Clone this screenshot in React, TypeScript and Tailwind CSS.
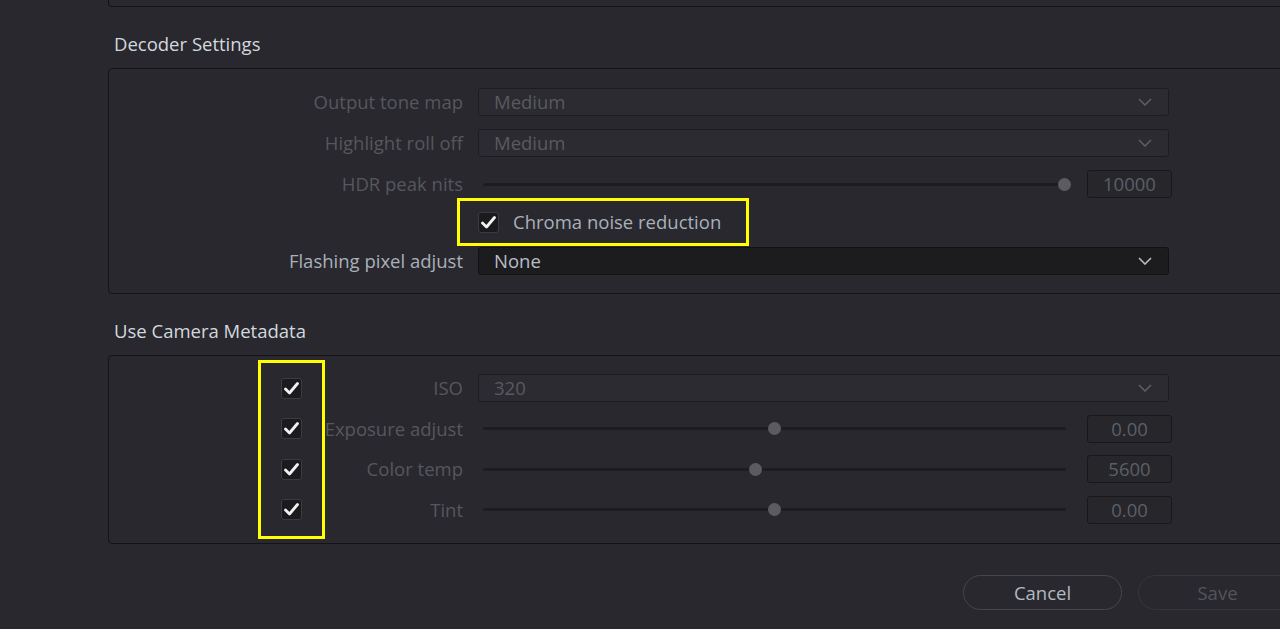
import React from "react";

const font = { fontFamily: '"Open Sans", "Noto Sans", sans-serif' };

function Chevron({ active }: { active?: boolean }) {
  return (
    <svg width="14" height="8" viewBox="0 0 14 8" className="shrink-0">
      <path
        d="M1 1 L7 7 L13 1"
        fill="none"
        stroke={active ? "#b9bcc2" : "#5c5c62"}
        strokeWidth="1.6"
      />
    </svg>
  );
}

function Check() {
  return (
    <div className="w-[21px] h-[21px] rounded-[3px] bg-[#1b1b1f] border border-[#3b3b41] flex items-center justify-center shrink-0">
      <svg width="15" height="13" viewBox="0 0 15 13">
        <path
          d="M1.5 7 L5.5 11 L13.5 1.5"
          fill="none"
          stroke="#f2f2f2"
          strokeWidth="2.8"
          strokeLinecap="round"
          strokeLinejoin="round"
        />
      </svg>
    </div>
  );
}

function Dropdown({ value, active }: { value: string; active?: boolean }) {
  return (
    <div
      className={
        "w-[691px] h-[28px] rounded-[3px] border flex items-center justify-between pl-[15px] pr-[16px] " +
        (active
          ? "bg-[#1c1c1f] border-[#121214] text-[#b8bfc7]"
          : "bg-[#2b2b31] border-[#1d1d21] text-[#595a60]")
      }
    >
      <span className="text-[18.5px] leading-none">{value}</span>
      <Chevron active={active} />
    </div>
  );
}

function Slider({ pos, value }: { pos: number; value: string }) {
  return (
    <div className="flex items-center">
      <div className="ml-[5px] w-[583px] h-[3px] bg-[#1d1d21] rounded-full relative">
        <div
          className="absolute top-1/2 w-[13px] h-[13px] -mt-[6.5px] -ml-[6.5px] rounded-full bg-[#5b5b60]"
          style={{ left: pos }}
        />
      </div>
      <div className="ml-[21px] w-[85px] h-[28px] rounded-[3px] border border-[#18181b] bg-[#26262b] flex items-center justify-center text-[18.5px] text-[#5b6068]">
        {value}
      </div>
    </div>
  );
}

function Label({ children, active }: { children: React.ReactNode; active?: boolean }) {
  return (
    <div
      className={
        "text-right text-[18.5px] whitespace-nowrap " +
        (active ? "text-[#a9b1ba]" : "text-[#56575d]")
      }
    >
      {children}
    </div>
  );
}

function DecRow({
  label,
  children,
  active,
}: {
  label: string;
  children: React.ReactNode;
  active?: boolean;
}) {
  return (
    <div className="flex items-center h-[28px]">
      <div className="w-[354px]">
        <Label active={active}>{label}</Label>
      </div>
      <div className="ml-[15px]">{children}</div>
    </div>
  );
}

function CamRow({ label, children }: { label: string; children: React.ReactNode }) {
  return (
    <div className="flex items-center h-[28px]">
      <div className="w-[354px] flex items-center">
        <div className="ml-[172px]">
          <Check />
        </div>
        <div className="flex-1">
          <Label>{label}</Label>
        </div>
      </div>
      <div className="ml-[15px]">{children}</div>
    </div>
  );
}

export default function App() {
  return (
    <div
      className="w-[1280px] h-[629px] overflow-hidden bg-[#28282e] text-[#cfd4da]"
      style={font}
    >
      <div className="ml-[108px] w-[1250px] h-[7px] border-l border-b border-[#141416] rounded-bl-[4px]" />

      <div className="ml-[114px] mt-[25px] h-[24px] flex items-center text-[18.5px] text-[#d3d8de]">
        Decoder Settings
      </div>

      <div className="ml-[108px] mt-[12px] w-[1250px] h-[226px] border border-[#141416] rounded-[4px] pt-[19px]">
        <div className="flex flex-col gap-[13px]">
          <DecRow label="Output tone map">
            <Dropdown value="Medium" />
          </DecRow>
          <DecRow label="Highlight roll off">
            <Dropdown value="Medium" />
          </DecRow>
          <DecRow label="HDR peak nits">
            <Slider pos={581} value="10000" />
          </DecRow>
        </div>
        <div className="flex h-[48px] mt-0">
          <div className="w-[348px]" />
          <div className="border-[3px] border-[#ffff00] flex items-center pl-[18px] h-[48px] w-[292px]">
            <Check />
            <span className="ml-[14px] text-[18.5px] text-[#a9b1ba] whitespace-nowrap">
              Chroma noise reduction
            </span>
          </div>
        </div>
        <div className="mt-[1px]">
          <DecRow label="Flashing pixel adjust" active>
            <Dropdown value="None" active />
          </DecRow>
        </div>
      </div>

      <div className="ml-[114px] mt-[25px] h-[24px] flex items-center text-[18.5px] text-[#d3d8de]">
        Use Camera Metadata
      </div>

      <div className="relative ml-[108px] mt-[12px] w-[1250px] h-[189px] border border-[#141416] rounded-[4px] pt-[18px]">
        <div className="absolute left-[149px] top-[4px] w-[67px] h-[179px] border-[3px] border-[#ffff00] pointer-events-none" />
        <div className="flex flex-col gap-[12.5px]">
          <CamRow label="ISO">
            <Dropdown value="320" />
          </CamRow>
          <CamRow label="Exposure adjust">
            <Slider pos={291} value="0.00" />
          </CamRow>
          <CamRow label="Color temp">
            <Slider pos={272} value="5600" />
          </CamRow>
          <CamRow label="Tint">
            <Slider pos={291} value="0.00" />
          </CamRow>
        </div>
      </div>

      <div className="flex ml-[963px] mt-[31px] gap-[16px] w-[400px]">
        <div className="shrink-0 w-[159px] h-[35px] rounded-full border border-[#45464c] flex items-center justify-center text-[18.5px] text-[#b3bac2]">
          Cancel
        </div>
        <div className="shrink-0 w-[159px] h-[35px] rounded-full border border-[#36363c] flex items-center justify-center text-[18.5px] text-[#54555b]">
          Save
        </div>
      </div>
    </div>
  );
}
